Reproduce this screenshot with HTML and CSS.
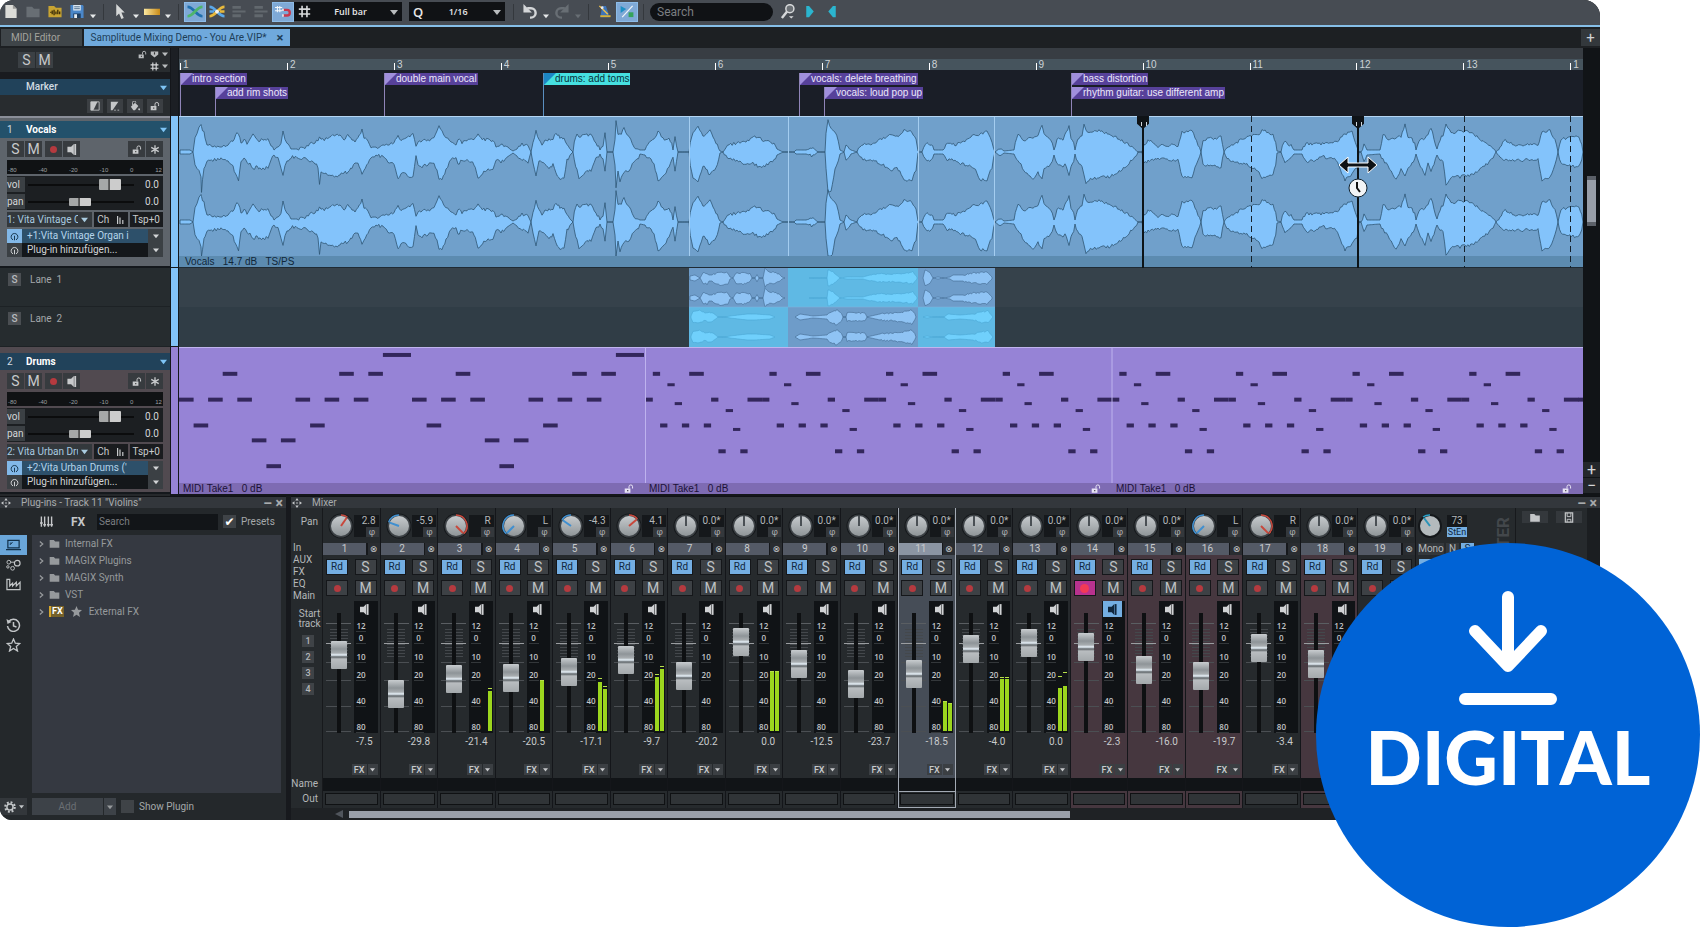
FILE: index.html
```html
<!DOCTYPE html>
<html lang="en">
<head>
<meta charset="utf-8">
<title>Samplitude Mixing Demo</title>
<link rel="stylesheet" href="styles.css">
</head>
<body>
<svg class="sprite" aria-hidden="true">
  <symbol id="caret" viewBox="0 0 8 8"><path d="M0 2h8L4 7z" fill="currentColor"/></symbol>
  <symbol id="doc" viewBox="0 0 16 16"><path d="M2 1h8l4 4v10H2z" fill="#dcdcd8"/><path d="M10 1v4h4z" fill="#9a9a98"/></symbol>
  <symbol id="folder" viewBox="0 0 16 16"><path d="M1 3h6l2 2h6v9H1z" fill="currentColor"/></symbol>
  <symbol id="wavefolder" viewBox="0 0 16 16"><path d="M1 2h6l2 2h6v10H1z" fill="#c8a432"/><path d="M3 9h1M5 7v4M7 6v6M9 8v3M11 6v5M13 8v3" stroke="#3a2c08" stroke-width="1.4"/></symbol>
  <symbol id="save" viewBox="0 0 16 16"><path d="M1 1h13l1 1v13H1z" fill="#4a86c8"/><path d="M4 1h8v6H4z" fill="#dfe9f2"/><path d="M5 3h6M5 5h6" stroke="#4a6a8a"/><path d="M4 10h8v5H4z" fill="#1f3d5f"/><path d="M5 11h3v4H5z" fill="#e8eef4"/></symbol>
  <symbol id="pointer" viewBox="0 0 16 16"><path d="M4 0v13l3-3 2.500 6 2.500-1-2.500-6H13z" fill="#d6d8d8"/></symbol>
  <symbol id="bar" viewBox="0 0 18 16"><defs><linearGradient id="gold"><stop offset="0" stop-color="#fbe8a0"/><stop offset="1" stop-color="#c88a16"/></linearGradient></defs><path d="M0 5h18v7H0z" fill="url(#gold)"/></symbol>
  <symbol id="cross" viewBox="0 0 16 16"><path d="M0 3c7 0 9 10 16 10" fill="none" stroke="#1f6fae" stroke-width="2.800"/><path d="M0 13C7 13 9 3 16 3" fill="none" stroke="#4fb56b" stroke-width="2.800"/></symbol>
  <symbol id="crosses" viewBox="0 0 16 16"><path d="M0 3c7 0 9 10 16 10M0 8h5" fill="none" stroke="#5aa7e8" stroke-width="2.800"/><path d="M0 13C7 13 9 3 16 3M11 8h5" fill="none" stroke="#e8b93c" stroke-width="2.800"/><circle cx="8" cy="8" r="2" fill="#f2f2f2"/></symbol>
  <symbol id="lines" viewBox="0 0 16 16"><path d="M1 2h9v3H1zM1 7h14v2H1zM1 11h9v3H1z" fill="#62686e"/></symbol>
  <symbol id="magnet" viewBox="0 0 20 16"><path d="M3 1v8M6 1v8M0 3h9M0 7h9" stroke="#f4f8fb" stroke-width="1.300"/><path d="M10 6h5a3 3 0 0 1 0 7h-5" fill="none" stroke="#c8384e" stroke-width="3"/><path d="M9 4.500h2v3H9zM9 11.500h2v3H9z" fill="#eee"/></symbol>
  <symbol id="hash" viewBox="0 0 16 16"><path d="M5 1v14M11 1v14M1 5h14M1 11h14" stroke="#d8dadc" stroke-width="2"/></symbol>
  <symbol id="undo" viewBox="0 0 16 16"><path d="M5 4.500h4a5 5 0 0 1 0 10H8" fill="none" stroke="currentColor" stroke-width="2.600"/><path d="M1 0v9h9z" fill="currentColor"/></symbol>
  <symbol id="metro" viewBox="0 0 16 16"><path d="M5 2h4l4 12H3z" fill="#3d74b8"/><path d="M2 2l9 9" stroke="#f0c14a" stroke-width="1.500"/><path d="M3 12h11v2H3z" fill="#d6b13a"/><circle cx="5" cy="4" r="1.500" fill="#e8e8e8"/></symbol>
  <symbol id="playstop" viewBox="0 0 20 16"><path d="M2 1l7 4-7 5z" fill="#1c8fc4"/><path d="M4 15L17 1" stroke="#f0f5f8" stroke-width="1.500"/><path d="M12 9h6v6h-6z" fill="#35a25a"/></symbol>
  <symbol id="lens" viewBox="0 0 16 16"><circle cx="10" cy="5" r="4.300" fill="#6b7075" stroke="#d6d8da" stroke-width="1.600"/><path d="M7 8l-5.500 7" stroke="#d6d8da" stroke-width="2.600"/><path d="M9 13h5l-2.500 2.500z" fill="#d6d8da"/></symbol>
  <symbol id="right" viewBox="0 0 16 16"><path d="M4 2h3l5 6-5 6H4z" fill="#2bb5cf"/></symbol>
  <symbol id="left" viewBox="0 0 16 16"><path d="M12 2H9L4 8l5 6h3z" fill="#2bb5cf"/></symbol>
  <symbol id="lock" viewBox="0 0 14 12"><path d="M1 6h8v6H1z" fill="currentColor"/><path d="M7 6V3.500a2.500 2.500 0 0 1 5 0V6" fill="none" stroke="currentColor" stroke-width="1.400"/><path d="M4.500 8h1.500v2H4.500z" fill="#333"/></symbol>
  <symbol id="flag" viewBox="0 0 12 10"><path d="M1 1h10v4L6 9 1 5z" fill="currentColor"/><path d="M6 2v3" stroke="#333" stroke-width="1.500"/></symbol>
  <symbol id="fade1" viewBox="0 0 12 12"><path d="M1 1h10v10H1z" fill="none" stroke="currentColor"/><path d="M1 11V1h8L4 11z" fill="currentColor"/></symbol>
  <symbol id="fade2" viewBox="0 0 12 12"><path d="M1 11V1h9L3 11z" fill="currentColor"/><path d="M5 11h2M9 11h2" stroke="currentColor"/></symbol>
  <symbol id="fill" viewBox="0 0 12 12"><path d="M1 7l5-5 4 4-4 5H4z" fill="currentColor"/><path d="M3 5V2a2 2 0 0 1 4 0" fill="none" stroke="currentColor"/><circle cx="11" cy="10" r="1.200" fill="currentColor"/></symbol>
  <symbol id="speaker" viewBox="0 0 10 12"><path d="M0 3h4v6H0zM3 4l4-4v12L3 8z" fill="currentColor"/><path d="M8.500 0v12" stroke="currentColor" stroke-width="2"/></symbol>
  <symbol id="star6" viewBox="0 0 12 12"><path d="M6 1v10M1.500 3.500l9 5M1.500 8.500l9-5" stroke="currentColor" stroke-width="1.600"/></symbol>
  <symbol id="power" viewBox="0 0 12 12"><path d="M4 10.500a4.500 4.500 0 1 1 4 0M6 5v6" fill="none" stroke="currentColor" stroke-width="1.300"/></symbol>
  <symbol id="bars" viewBox="0 0 10 10"><path d="M2 0v10M5 2v8M8.500 5v5" stroke="currentColor" stroke-width="1.500"/></symbol>
  <symbol id="move" viewBox="0 0 12 12"><path d="M6 0l2 3H4zM6 12l2-3H4zM0 6l3-2v4zM12 6L9 4v4z" fill="currentColor"/><circle cx="6" cy="6" r="1" fill="currentColor"/></symbol>
  <symbol id="keys" viewBox="0 0 14 12"><path d="M1.500 0v11M5 0v11M9 0v11M12.500 0v11" stroke="currentColor" stroke-width="1.500"/><path d="M0 7h3M3.500 9h3M7.500 9h3M11 9h3" stroke="currentColor" stroke-width="1.500"/></symbol>
  <symbol id="laptop" viewBox="0 0 16 12"><path d="M2 1h12v8H2zM0 11h16" fill="none" stroke="currentColor" stroke-width="1.300"/><path d="M4 6l3-3M4 4h2" stroke="currentColor"/></symbol>
  <symbol id="nodes" viewBox="0 0 16 12"><circle cx="3" cy="3" r="2" fill="none" stroke="currentColor"/><circle cx="12" cy="4" r="3" fill="none" stroke="currentColor" stroke-width="1.300"/><circle cx="7" cy="9.500" r="2" fill="none" stroke="currentColor"/><circle cx="2" cy="8" r="1.300" fill="none" stroke="currentColor"/><path d="M5 3h4" stroke="currentColor"/></symbol>
  <symbol id="factory" viewBox="0 0 16 12"><path d="M1 0v11h14V3l-4 4V3L7 7V4L4 7V0z" fill="none" stroke="currentColor" stroke-width="1.300"/></symbol>
  <symbol id="history" viewBox="0 0 14 14"><path d="M2 4a6 6 0 1 1-1 4M7 4v4l3 1" fill="none" stroke="currentColor" stroke-width="1.500"/><path d="M0 1l1 5 4-2z" fill="currentColor"/></symbol>
  <symbol id="star" viewBox="0 0 14 14"><path d="M7 1l1.800 4.200 4.500.3-3.500 2.900 1.200 4.600L7 10.500 3 13l1.200-4.600L.7 5.500l4.500-.3z" fill="none" stroke="currentColor" stroke-width="1.300"/></symbol>
  <symbol id="starfull" viewBox="0 0 14 14"><path d="M7 0l2 4.800 5 .4-3.800 3.300L11.400 14 7 11l-4.400 3 1.200-5.500L0 5.200l5-.4z" fill="currentColor"/></symbol>
  <symbol id="gear" viewBox="0 0 14 14"><circle cx="7" cy="7" r="5.500" fill="none" stroke="currentColor" stroke-width="2.500" stroke-dasharray="2.200 2.120"/><circle cx="7" cy="7" r="3.600" fill="none" stroke="currentColor" stroke-width="1.800"/></symbol>
  <symbol id="chev" viewBox="0 0 6 8"><path d="M1 1l3.500 3L1 7" fill="none" stroke="currentColor" stroke-width="1.500"/></symbol>
  <symbol id="diskette" viewBox="0 0 12 12"><path d="M2 1h8v10H2z" fill="none" stroke="currentColor" stroke-width="1.300"/><path d="M4 1v4h4V1M4 11V8h4v3" fill="none" stroke="currentColor"/></symbol>
</svg>

<main class="app">
  <header class="toolbar">
    <button class="tool" aria-label="New"><svg><use href="#doc"/></svg></button>
    <button class="tool dim" aria-label="Open"><svg><use href="#folder"/></svg></button>
    <button class="tool" aria-label="Import audio"><svg><use href="#wavefolder"/></svg></button>
    <button class="tool" aria-label="Save"><svg><use href="#save"/></svg></button>
    <button class="drop" aria-label="Save options"><svg><use href="#caret"/></svg></button>
    <i class="sep"></i>
    <button class="tool" aria-label="Pointer"><svg><use href="#pointer"/></svg></button>
    <button class="drop" aria-label="Pointer options"><svg><use href="#caret"/></svg></button>
    <button class="tool" aria-label="Range"><svg><use href="#bar"/></svg></button>
    <button class="drop" aria-label="Range options"><svg><use href="#caret"/></svg></button>
    <i class="sep"></i>
    <button class="tool on" aria-label="Crossfade"><svg><use href="#cross"/></svg></button>
    <button class="tool" aria-label="Crossfade editor"><svg><use href="#crosses"/></svg></button>
    <button class="tool" aria-label="Group"><svg><use href="#lines"/></svg></button>
    <button class="tool" aria-label="Ungroup"><svg><use href="#lines"/></svg></button>
    <button class="tool on" aria-label="Snap"><svg><use href="#magnet"/></svg></button>
    <label class="pick grid"><svg><use href="#hash"/></svg><select aria-label="Grid"><option>Full bar</option></select><svg class="caret"><use href="#caret"/></svg></label>
    <label class="pick quant"><b>Q</b><select aria-label="Quantize"><option>1/16</option></select><svg class="caret"><use href="#caret"/></svg></label>
    <i class="sep"></i>
    <button class="tool" aria-label="Undo"><svg><use href="#undo"/></svg></button>
    <button class="drop" aria-label="Undo list"><svg><use href="#caret"/></svg></button>
    <button class="tool dim flip" aria-label="Redo"><svg><use href="#undo"/></svg></button>
    <button class="drop dim" aria-label="Redo list"><svg><use href="#caret"/></svg></button>
    <i class="sep"></i>
    <button class="tool" aria-label="Metronome"><svg><use href="#metro"/></svg></button>
    <button class="tool on" aria-label="Playback mode"><svg><use href="#playstop"/></svg></button>
    <i class="sep"></i>
    <input class="search" type="search" placeholder="Search" aria-label="Search">
    <button class="tool" aria-label="Find"><svg><use href="#lens"/></svg></button>
    <button class="tool" aria-label="Next"><svg><use href="#right"/></svg></button>
    <button class="tool" aria-label="Previous"><svg><use href="#left"/></svg></button>
  </header>

  <nav class="tabs">
    <button class="tab midi">MIDI Editor</button>
    <button class="tab current">Samplitude Mixing Demo - You Are.VIP* <b>×</b></button>
    <button class="addtab" aria-label="Add tab">+</button>
  </nav>

  <section class="arranger">
    <div class="heads">
      <div class="top">
        <div class="global">
          <div class="pair"><button>S</button><button>M</button></div>
          <div class="opts">
            <span><svg><use href="#lock"/></svg><svg><use href="#flag"/></svg><svg class="caret"><use href="#caret"/></svg></span>
            <span><svg><use href="#hash"/></svg><svg class="caret"><use href="#caret"/></svg></span>
          </div>
        </div>
        <div class="title"><span></span><b>Marker</b><svg class="caret"><use href="#caret"/></svg></div>
        <div class="tools">
          <button aria-label="Fade in"><svg><use href="#fade1"/></svg></button>
          <button aria-label="Fade out"><svg><use href="#fade2"/></svg></button>
          <button aria-label="Colour"><svg><use href="#fill"/></svg></button>
          <button aria-label="Lock"><svg><use href="#lock"/></svg></button>
        </div>
      </div>
      <div class="track vocals" id="track1"></div>
      <div class="lanehead"><button>S</button>Lane&nbsp; 1</div>
      <div class="lanehead"><button>S</button>Lane&nbsp; 2</div>
      <div class="track drums" id="track2"></div>
    </div>
    <div class="stripe"><i class="s0"></i><i class="s1"></i><i class="s2"></i><i class="s3"></i></div>
    <div class="canvas">
      <div class="ruler" id="ruler"></div>
      <div class="markers" id="markers"></div>
      <div class="row audio">
        <svg id="audio" viewBox="0 0 1404 150" preserveAspectRatio="none"></svg>
        <p class="foot blue">Vocals &nbsp; 14.7 dB &nbsp; TS/PS</p>
      </div>
      <div class="row lanes"><svg id="lanes" viewBox="0 0 1404 79" preserveAspectRatio="none"></svg></div>
      <div class="row notes">
        <svg id="notes" viewBox="0 0 1404 147" preserveAspectRatio="none"></svg>
        <div class="foot violet">
          <p>MIDI Take1 &nbsp; 0 dB<svg><use href="#lock"/></svg></p>
          <p>MIDI Take1 &nbsp; 0 dB<svg><use href="#lock"/></svg></p>
          <p>MIDI Take1 &nbsp; 0 dB<svg><use href="#lock"/></svg></p>
        </div>
      </div>
      <div class="cursors" id="cursors"></div>
    </div>
    <div class="vbar"><i></i><div><button>+</button><button>−</button></div></div>
  </section>

  <section class="docks">
    <aside class="plugins">
      <h2><svg><use href="#move"/></svg>Plug-ins - Track 11 "Violins"<span>– ×</span></h2>
      <div class="pbody">
        <div class="rail">
          <button class="on" aria-label="Plug-ins"><svg><use href="#laptop"/></svg></button>
          <button aria-label="Types"><svg><use href="#nodes"/></svg></button>
          <button aria-label="Manufacturers"><svg><use href="#factory"/></svg></button>
          <button class="gap" aria-label="Recent"><svg><use href="#history"/></svg></button>
          <button aria-label="Favourites"><svg><use href="#star"/></svg></button>
          <button class="gear" aria-label="Settings"><svg><use href="#gear"/></svg><svg class="caret"><use href="#caret"/></svg></button>
        </div>
        <div class="browser">
          <div class="ptools">
            <button aria-label="Instruments"><svg><use href="#keys"/></svg></button>
            <button class="fx">FX</button>
            <input type="search" placeholder="Search" aria-label="Search plug-ins">
            <label><input type="checkbox" checked>Presets</label>
          </div>
          <ul class="tree">
            <li><svg class="chev"><use href="#chev"/></svg><svg><use href="#folder"/></svg>Internal FX</li>
            <li><svg class="chev"><use href="#chev"/></svg><svg><use href="#folder"/></svg>MAGIX Plugins</li>
            <li><svg class="chev"><use href="#chev"/></svg><svg><use href="#folder"/></svg>MAGIX Synth</li>
            <li><svg class="chev"><use href="#chev"/></svg><svg><use href="#folder"/></svg>VST</li>
            <li><svg class="chev"><use href="#chev"/></svg><b>FX</b><svg><use href="#starfull"/></svg>External FX</li>
          </ul>
          <div class="pfoot">
            <button class="add">Add</button><button class="more" aria-label="More"><svg><use href="#caret"/></svg></button>
            <label><input type="checkbox">Show Plugin</label>
          </div>
        </div>
      </div>
    </aside>
    <section class="mixer">
      <h2><svg><use href="#move"/></svg>Mixer<span>– ×</span></h2>
      <div class="desk">
        <div class="labels">
          <span class="pan">Pan</span>
          <div class="io"><span>In</span><span>AUX</span><span>FX</span><span>EQ</span><span>Main</span></div>
          <span class="start">Start<br>track</span>
          <div class="nums"><button>1</button><button>2</button><button>3</button><button>4</button></div>
          <span class="name">Name</span><span class="out">Out</span>
        </div>
        <div class="channels" id="channels"></div>
        <div class="master">
          <div class="mtop">
            <svg class="knob" viewBox="-13 -13 26 26"><circle r="12" fill="#15181b"/><circle r="10" fill="#b4babd"/><path d="M0 0L-6-8" stroke="#2a93b8" stroke-width="2"/><path d="M-7-9A11 11 0 0 1 0-11" fill="none" stroke="#2aa4cc" stroke-width="1.500"/></svg>
            <div class="panbox"><span>73</span><b>StEn</b></div>
          </div>
          <div class="mono"><button>Mono</button><button>N</button><button class="on">S</button></div>
          <div class="mbtn"><button class="on">Rd</button></div>
          <span class="vert">MASTER</span>
        </div>
        <div class="side"><button aria-label="Load"><svg><use href="#folder"/></svg></button><button aria-label="Save mixer"><svg><use href="#diskette"/></svg></button></div>
      </div>
      <div class="hbar"><svg viewBox="0 0 8 8"><path d="M8 0v8L0 4z" fill="#50555c"/></svg><i></i></div>
    </section>
  </section>
</main>

<div class="badge">
  <svg viewBox="0 0 98 114"><path d="M49 6v69M16 40l33 35 33-35M6 108h86" fill="none" stroke="#fff" stroke-width="12" stroke-linecap="round" stroke-linejoin="round"/></svg>
  <strong>DIGITAL</strong>
</div>
<script src="app.js"></script>
</body>
</html>
```

FILE: styles.css
```css
* { box-sizing: border-box; }
body { margin: 0; background: #fff; color: #b4b7b9; font: 10px/12px Roboto, "Noto Sans", sans-serif; }
button, input, select { font: inherit; color: inherit; border: 0; padding: 0; margin: 0; background: none; border-radius: 0; }
button { display: flex; align-items: center; justify-content: center; }
p, h2, ul { margin: 0; padding: 0; font-weight: normal; }
li { list-style: none; }
svg { display: block; }
.sprite { position: absolute; width: 0; height: 0; }
.caret { width: 7px; height: 7px; flex: none; }

.app { margin-right: 100px; border-radius: 14px 16px 0 12px; overflow: hidden; background: #17191d; }

/* toolbar */
.toolbar { display: flex; height: 27px; padding: 0 0 2px; background: #474c53; border-bottom: 2px solid #86bfe8; align-items: center; }
.tool { width: 22px; height: 20px; flex: none; color: #d4d6d8; }
.tool svg { width: 16px; height: 15px; }
.tool.on { background: #7fa9d6; border: 1px solid #8dbce8; }
.tool.dim, .drop.dim { color: #686e74; }
.flip svg { transform: scaleX(-1); }
.drop { width: 10px; height: 20px; flex: none; color: #e6e8e9; padding-top: 9px; }
.drop svg { width: 6px; height: 6px; }
.sep { width: 1px; height: 16px; margin: 0 5px; background: #34383d; flex: none; }
.pick { display: flex; align-items: center; height: 19px; background: #101215; color: #e8e8e8; padding: 0 4px; }
.pick svg { width: 13px; height: 13px; }
.pick .caret { width: 8px; height: 8px; color: #b9bcbe; }
.pick select { flex: 1; min-width: 0; appearance: none; text-align: center; font: 600 9px/12px "Open Sans", sans-serif; outline: 0; }
.grid { width: 108px; }
.quant { width: 96px; margin: 0 3px 0 7px; }
.quant b { font: 600 13px/16px "Open Sans", sans-serif; }
.search { width: 123px; height: 18px; margin: 0 4px 0 1px; padding: 0 7px; border-radius: 9px; background: #101215; font-size: 12px; }
::placeholder { color: #7b7e81; opacity: 1; }

/* tabs */
.tabs { display: flex; height: 21px; padding: 2px 0 2px 1px; gap: 2px; background: #1d2023; }
.tab { background: #3f4549; color: #a3a39d; }
.tab.midi { width: 81px; padding-right: 12px; }
.tab.current { width: 206px; background: #6fa9dc; color: #1d3d57; gap: 10px; }
.tab b { font-size: 13px; }
.addtab { width: 19px; margin-left: auto; background: #33383c; color: #d0d2d4; font-size: 15px; }

/* arranger */
.arranger { display: flex; height: 448px; }
.heads { width: 171px; flex: none; background: #25282b; border-right: 1px solid #14161a; }
.top { height: 68px; display: flex; flex-direction: column; background: #282c2f; }
.global { display: flex; height: 31px; padding: 0 2px 0 18px; justify-content: space-between; border-bottom: 7px solid #191b1f; }
.pair { display: flex; gap: 1px; padding-top: 4px; }
.pair button { width: 17px; height: 16px; background: #3b4044; color: #c6c8ca; font-size: 14px; line-height: 16px; }
.opts { display: flex; flex-direction: column; align-items: flex-end; color: #b9bcbe; }
.opts span { display: flex; height: 12px; gap: 3px; align-items: center; }
.opts svg { width: 9px; height: 9px; }
.opts .caret { width: 6px; height: 6px; }
.title { display: flex; align-items: center; height: 16px; padding: 0 3px 0 7px; background: #21425a; color: #d2dbe2; font-size: 10px; }
.title span { width: 19px; }
.title b { flex: 1; font-weight: 500; }
.title .caret { color: #7ec4f5; }
.tools { display: flex; gap: 4px; justify-content: flex-end; padding: 4px 7px 0 0; color: #c4c6c8; }
.tools button { width: 16px; height: 14px; background: #3b3f43; }
.tools svg { width: 10px; height: 10px; }

.track { padding-top: 6px; border-bottom: 2px solid #14181c; }
.vocals { height: 152px; padding-top: 3px; background: #5e646b; border-top: 2px solid #8a8e98; }
.drums { height: 147px; background: #514a50; }
.track .title { height: 17px; }
.track.vocals .title { background: #23516b; }
.track .title b { color: #fff; font-weight: 700; }
.tb { padding: 3px 7px 0; display: grid; gap: 2px; }
.btns { display: flex; height: 17px; padding-bottom: 1px; gap: 1px; }
.btns button { width: 17px; background: #373b3f; color: #c8cacc; font-size: 14px; }
.btns svg { width: 10px; height: 11px; }
.btns .off { margin-left: 2px; }
.btns .end { margin-left: auto; }
.rec { width: 7px; height: 7px; border-radius: 50%; background: #b53a3f; }
.scale { display: flex; justify-content: space-between; align-items: flex-end; height: 14px; background: #101214; color: #9da0a2; font: 6px/7px "Liberation Sans", sans-serif; padding: 0 1px; }
.slides { height: 34px; background: #1c1f22; }
.slides label { display: flex; height: 17px; align-items: center; color: #d4d6d8; }
.slides span { width: 18px; flex: none; background: #3b4044; line-height: 15px; }
.slides input { width: 106px; margin: 0 3px; height: 15px; appearance: none; background: linear-gradient(#0b0c0d, #0b0c0d) center / 100% 2px no-repeat; }
.slides input::-webkit-slider-thumb { appearance: none; width: 22px; height: 11px; border-radius: 1px; background: linear-gradient(90deg, #a6a8a8 40%, #222 46%, #ccc 52%); }
.slides .panner::-webkit-slider-thumb { height: 8px; }
.slides output { margin-left: auto; margin-right: 4px; }
.inst { display: flex; gap: 2px; height: 15px; }
.inst .sel { display: flex; align-items: center; width: 85px; background: #33383c; color: #a9cbe0; padding-right: 4px; }
.inst select { flex: 1; min-width: 0; margin-right: 3px; appearance: none; white-space: nowrap; overflow: hidden; }
.inst .cell { display: flex; flex: 1; align-items: center; justify-content: space-around; background: #1a1c1f; color: #c8cacc; }
.inst .cell svg { width: 8px; height: 8px; }
.plug { display: flex; height: 14px; background: #14171a; color: #d2d4d6; }
.plug + .plug { margin-top: -2px; }
.plug button { width: 15px; background: #3b4044; }
.plug button svg { width: 9px; height: 9px; }
.plug span { flex: 1; padding-left: 5px; line-height: 14px; white-space: nowrap; overflow: hidden; }
.plug button.caretb svg { width: 6px; height: 6px; }
.plug.on span { background: #2d506a; color: #b4d4ea; }
.plug.on .pw { background: #82b8e8; color: #17364e; }
.lanehead { display: flex; gap: 9px; height: 39px; padding: 5px 8px; background: #262c2f; border-bottom: 1px solid #1d2225; color: #a3a7aa; line-height: 13px; }
.lanehead + .lanehead { height: 40px; }
.lanehead button { width: 13px; height: 13px; background: #4a4e52; color: #b8bbbe; font-weight: 500; }

.stripe { width: 8px; flex: none; display: flex; flex-direction: column; background: #14181c; padding-right: 1px; }
.s0 { height: 68px; background: #1c1f24; }
.s1 { height: 151px; margin-bottom: 1px; background: #83c3f8; }
.s2 { height: 78px; margin-bottom: 1px; background: #83c3f8; }
.s3 { height: 147px; background: #9683d6; }

.canvas { flex: 1; min-width: 0; position: relative; overflow: hidden; background: #14161a; }
.ruler { position: relative; height: 22px; border-top: 11px solid #383d43; background: #46545d; }
.ruler span { position: absolute; bottom: 0; height: 11px; font: 10px/11px "Liberation Sans", sans-serif; color: #cdd3d7; padding-left: 3px; white-space: nowrap; }
.ruler span::before { content: ""; position: absolute; left: 0; bottom: 0; width: 1px; height: 7px; background: #fff; }
.markers { position: relative; height: 46px; background: #1a1e27; }
.mark { position: absolute; top: 3px; bottom: 0; border-left: 1px solid #8f84b8; }
.mark.second { top: 17px; }
.mark span { display: block; height: 12px; padding: 0 1px 0 11px; font: 10px/12px "Liberation Sans", sans-serif; color: #ece8fa; white-space: nowrap; background: linear-gradient(135deg, #a08fdc 8px, #57419a 9px); }
.mark.cyan { border-color: #5a8fc0; }
.mark.cyan span { color: #06323a; background: linear-gradient(135deg, #1c86c4 8px, #46e0e0 9px); }
.row { position: relative; }
.row > svg { width: 100%; height: 100%; }
.audio { height: 152px; background: #70a0cb; border-top: 1px solid #b4d6f4; border-bottom: 1px solid #1f2b34; }
.lanes { height: 79px; background: linear-gradient(#36424b 39px, #303d46 39px); }
.notes { height: 147px; background: #9683d6; border-top: 1px solid #c0b4ee; }
.foot { position: absolute; left: 0; right: 0; bottom: 0; height: 11px; font: 10px/11px "Liberation Sans", sans-serif; }
.foot.blue { padding-left: 6px; background: #5c8bb0; color: #10273a; }
.foot.violet { display: grid; grid-template-columns: 466fr 467fr 471fr; background: #7e6bb3; color: #1c1238; }
.foot p { display: flex; padding-left: 4px; white-space: pre; }
.foot.violet p svg { width: 10px; height: 9px; margin: 1px 11px 0 auto; color: #e8e4f6; }
.cursors { position: absolute; inset: 68px 0 auto 0; height: 152px; }
.cursors i { position: absolute; top: 0; width: 1px; height: 152px; background: repeating-linear-gradient(#14202a 0 6px, transparent 6px 10px); }
.cursors .solid { width: 2px; margin-left: -1px; background: #0d1418; }
.cursors .solid::before { content: ""; position: absolute; left: -5px; top: 0; width: 12px; height: 13px; background: #0f1317; clip-path: polygon(0 0, 100% 0, 100% 60%, 50% 100%, 0 60%); }
.cursors .solid::after { content: ""; position: absolute; left: -1px; top: 6px; width: 4px; height: 4px; border: solid #cfd6dc; border-width: 0 1px; }
.cursors svg { position: absolute; top: 41px; width: 38px; height: 42px; margin-left: -19px; }
.vbar { width: 17px; flex: none; display: flex; flex-direction: column; background: #111417; }
.vbar i { width: 9px; height: 50px; margin: 128px 0 0 4px; background: #989ea8; border: solid #5b6068; border-width: 4px 0; }
.vbar div { margin-top: auto; padding-bottom: 3px; }
.vbar button { width: 17px; height: 15px; background: #24272b; color: #d4d6d8; font-size: 16px; margin-top: 1px; }

/* docks */
.docks { display: flex; height: 324px; gap: 5px; }
h2 { display: flex; align-items: center; height: 12px; padding: 0 3px 0 1px; gap: 10px; background: #33373c; font-size: 10px; line-height: 12px; color: #a8abad; border-top: 1px solid #101215; }
h2 svg { width: 10px; height: 10px; color: #c6c8ca; }
h2 span { margin-left: auto; font-size: 14px; font-weight: 700; }
.plugins { width: 286px; flex: none; background: #24282b; display: flex; flex-direction: column; }
.pbody { display: flex; flex: 1; gap: 5px; }
.rail { width: 27px; display: flex; flex-direction: column; padding-top: 27px; }
.rail button { height: 20px; color: #c2c5c7; }
.rail svg { width: 15px; height: 14px; }
.rail .on { background: #6aa6d9; color: #12304a; }
.rail .gap { margin-top: 20px; }
.rail .gear { margin: auto 0 5px; height: 17px; background: #33373b; gap: 3px; }
.rail .gear svg { width: 12px; height: 12px; }
.rail .gear .caret { width: 5px; height: 5px; }
.browser { flex: 1; padding-right: 5px; display: flex; flex-direction: column; color: #96999c; }
.ptools { display: flex; align-items: center; height: 27px; }
.ptools button { width: 28px; height: 18px; color: #c6c8ca; }
.ptools svg { width: 13px; height: 12px; }
.ptools .fx { margin: 0 5px 0 4px; font-weight: 700; font-size: 12px; }
.ptools input[type=search] { width: 121px; height: 16px; padding: 0 2px; background: #121518; }
.ptools label, .pfoot label { display: flex; align-items: center; gap: 5px; margin-left: 5px; color: #a5a8aa; }
input[type=checkbox] { appearance: none; width: 13px; height: 13px; background: #3f4347; display: grid; place-items: center; }
input[type=checkbox]:checked::after { content: "✔"; color: #fff; font: 12px/12px "DejaVu Sans", sans-serif; }
.tree { flex: 1; background: #353941; }
.tree li { display: flex; align-items: center; height: 17px; gap: 5px; padding-left: 7px; }
.tree svg { width: 11px; height: 11px; }
.tree .chev { width: 5px; height: 8px; }
.tree b { border-left: 2px solid #d6a72c; padding: 0 1px; background: #75612a; color: #fff; font-size: 9px; line-height: 11px; }
.tree b + svg { margin: 0 2px; }
.pfoot { display: flex; align-items: center; height: 27px; }
.pfoot button { height: 17px; background: #3d4248; }
.pfoot .add { width: 71px; color: #6b6f74; }
.more { width: 12px; margin-left: 1px; }
.more svg { width: 6px; height: 6px; }

.mixer { flex: 1; min-width: 0; background: #262a2d; display: flex; flex-direction: column; }
.desk { display: flex; flex: 1; }
.labels { width: 32px; flex: none; display: flex; flex-direction: column; border-right: 1px solid #17191c; line-height: 12px; }
.pan { margin-top: 8px; text-align: right; padding-right: 4px; }
.io { display: grid; margin-top: 14px; line-height: 12px; padding-left: 2px; }
.start { text-align: center; line-height: 10px; margin-top: 7px; padding-left: 6px; }
.nums { display: grid; gap: 4px; justify-content: center; margin-top: 6px; padding-left: 3px; }
.nums button { width: 12px; height: 12px; background: #3f4347; font-size: 9px; font-weight: 500; }
.name { margin: 83px 4px 0 0; text-align: right; }
.out { margin: 3px 4px 0 0; text-align: right; }
.channels { flex: 1; display: grid; grid-template-columns: repeat(19, 1fr); }
.ch { display: flex; flex-direction: column; border-right: 1px solid #14161a; min-width: 0; }
.ptop, .mtop { display: flex; height: 35px; padding: 5px 1px 0 5px; justify-content: space-between; }
.knob { width: 26px; height: 26px; flex: none; }
.panbox { display: flex; flex-direction: column; align-items: flex-end; width: 25px; height: 22px; margin-top: 2px; background: #15181b; line-height: 12px; white-space: nowrap; }
.panbox span { padding-right: 3px; }
.panbox b { width: 13px; height: 10px; background: #34383c; text-align: center; font: 9px/9px "Open Sans", sans-serif; }
.no { display: flex; height: 12px; background: #16181b; justify-content: space-between; text-align: center; color: #c8cacc; }
.no span { width: 43px; background: #545a66; line-height: 12px; }
.no i { width: 12px; background: #2a2d31; font: 9px/12px "DejaVu Sans", sans-serif; }
.core { padding: 4px 2px 0 3px; flex: 1; display: flex; flex-direction: column; }
.two { display: flex; justify-content: space-between; margin-bottom: 5px; padding-right: 1px; }
.two button { width: 22px; height: 16px; background: #3d4145; border: 1px solid #15171a; color: #bfc2c4; font-size: 14px; }
.two .rd { background: #74aee2; color: #10263c; font-size: 10px; }
.two .armed { background: #b8328e; }
.two .armed .rec { background: #f23a55; width: 9px; height: 9px; }
.body { display: flex; height: 132px; gap: 3px; }
.fad { width: 25px; height: 132px; padding-top: 12px; flex: none; background: linear-gradient(#5a5e62, #5a5e62) 0 22px / 100% 1px no-repeat, linear-gradient(#9a9da0, #9a9da0) 0 42px / 100% 1px no-repeat, linear-gradient(#4b4f53, #4b4f53) 0 61px / 100% 1px no-repeat, linear-gradient(#4b4f53, #4b4f53) 0 79px / 100% 1px no-repeat, linear-gradient(#4b4f53, #4b4f53) 0 105px / 100% 1px no-repeat, linear-gradient(#4b4f53, #4b4f53) 0 130px / 100% 1px no-repeat, repeating-linear-gradient(transparent 0 2px, #44484c 2px 3px) 50% 26px / 18px 30px no-repeat; }
.fad input { display: block; width: 16px; height: 120px; margin: 0 auto; appearance: none; writing-mode: vertical-lr; direction: rtl; background: linear-gradient(#0e1012, #0e1012) center / 4px 100% no-repeat; }
.fad input::-webkit-slider-thumb { appearance: none; width: 16px; height: 28px; border-radius: 1px; background: linear-gradient(#c8cccf, #8e9498 8px, #a8adb0 12px, #e8f2fa 14px, #5e6468 16px, #b9bdc0 18px, #a4a9ac); }
.meter { position: relative; flex: 1; background: #101316; color: #c4c6c8; }
.meter .spk { height: 16px; width: 19px; margin-left: 1px; color: #d0d2d4; }
.meter .spk svg { width: 9px; height: 11px; }
.meter .spk.on { background: #74aee2; color: #10263c; }
.meter ol { margin: 0; padding: 3px 0 0 2px; list-style: none; width: 12px; font: 600 8px/12px "Open Sans", sans-serif; text-align: center; }
.meter li:nth-child(3) { margin-top: 7px; }
.meter li:nth-child(4) { margin-top: 6px; }
.meter li:nth-child(5), .meter li:nth-child(6) { margin-top: 14px; }
.meter li { border-bottom: 1px solid #33373a; height: 12px; }
.level { position: absolute; bottom: 2px; width: 4px; background: #9cd61e; }
.level.l { right: 6px; }
.level.r { right: 1px; }
.level::before { content: ""; position: absolute; left: 0; width: 4px; height: 1px; background: #b8e04a; top: var(--peak, 0); }
.db { text-align: right; padding: 3px 5px 0 0; line-height: 12px; color: #c8cacc; }
.fx2 { display: flex; justify-content: flex-end; gap: 1px; margin: auto 0 3px; }
.fx2 button { height: 11px; width: 15px; background: #3b3f43; color: #c8cacc; font-size: 9px; font-weight: 500; }
.fx2 button + button { width: 10px; }
.fx2 svg { width: 5px; height: 5px; }
.nm { height: 13px; background: #111417; }
.ot { height: 17px; padding: 2px; }
.ot i { display: block; height: 12px; background: #303437; border: 1px solid #0f1113; }
.ch.red .core, .ch.red .ot { background: #46373f; }
.ch.sel { border: solid #a3aab4; border-width: 0 1px; }
.ch.sel .core { background: #464d57; padding-left: 2px; }
.ch.sel .ot { border: solid #a3aab4; border-width: 1px 0; padding: 1px; }
.ch.sel .no span { background: #8b95a3; }
.master { position: relative; width: 100px; border-right: 1px solid #17191c; }
.mtop { justify-content: flex-start; gap: 4px; padding-left: 1px; }
.mtop .panbox { width: 20px; align-items: center; }
.mtop .panbox span { padding: 0; }
.mtop .panbox b { width: 20px; background: #74aee2; color: #10263c; font: 9px/10px Roboto, sans-serif; }
.mono { display: flex; gap: 2px; height: 12px; padding-left: 2px; }
.mono button { width: 13px; background: #34383c; }
.mono button:first-child { width: 26px; }
.mono button.on, .mbtn .on { background: #74aee2; color: #10263c; }
.mbtn { padding: 4px 3px; }
.mbtn button { width: 22px; height: 16px; }
.vert { position: absolute; top: 9px; right: 3px; writing-mode: vertical-rl; transform: rotate(180deg); font: 700 17px/18px Roboto, sans-serif; color: #43474b; }
.side { width: 84px; flex: none; display: flex; gap: 8px; padding: 3px 0 0 6px; border-right: 13px solid #1b1e21; }
.side button { width: 26px; height: 12px; background: #34383c; color: #c4c6c8; }
.side svg { width: 12px; height: 11px; }
.hbar { display: flex; align-items: center; height: 12px; padding-left: 44px; gap: 6px; background: #1f2225; }
.hbar svg { width: 8px; height: 8px; }
.hbar i { width: 57%; height: 7px; background: #9aa0aa; }

/* download badge */
.badge { position: absolute; top: 543px; right: 0; width: 384px; height: 384px; border-radius: 50%; background: #0063d6; display: flex; flex-direction: column; align-items: center; padding-top: 48px; gap: 8px; }
.badge svg { width: 98px; height: 114px; }
.badge strong { color: #fff; font: 900 74px/88px Lato, sans-serif; }
```

FILE: app.js
```js
const $ = id => document.getElementById(id);
const use = n => `<svg><use href="#${n}"/></svg>`;
const W = 1404;
const pct = x => (x / W * 100) + '%';

/* track heads */
[['1', 'Vocals', '1: Vita Vintage Organ', '+1:Vita Vintage Organ i'], ['2', 'Drums', '2: Vita Urban Drums', "+2:Vita Urban Drums ('"]].forEach(([n, name, inst, fx]) => {
  $('track' + n).innerHTML = `<div class="title"><span>${n}</span><b>${name}</b><svg class="caret"><use href="#caret"/></svg></div>
  <div class="tb">
    <div class="btns"><button>S</button><button>M</button><button class="off" aria-label="Record"><i class="rec"></i></button><button aria-label="Monitor">${use('speaker')}</button><button class="end" aria-label="Lock">${use('lock')}</button><button aria-label="Freeze">${use('star6')}</button></div>
    <div class="scale"><span>-80</span><span>-40</span><span>-20</span><span>-10</span><span>0</span><span>12</span></div>
    <div class="slides"><label><span>vol</span><input type="range" value="84"><output>0.0</output></label><label><span>pan</span><input class="panner" type="range" value="49"><output>0.0</output></label></div>
    <div class="inst"><div class="sel"><select aria-label="Instrument"><option>${inst}</option></select><svg class="caret"><use href="#caret"/></svg></div><div class="cell">Ch ${use('bars')}</div><div class="cell">Tsp+0</div></div>
    <div class="plug on"><button class="pw" aria-label="Bypass">${use('power')}</button><span>${fx}</span><button class="caretb" aria-label="Menu">${use('caret')}</button></div>
    <div class="plug"><button class="pw" aria-label="Bypass">${use('power')}</button><span>Plug-in hinzufügen...</span><button class="caretb" aria-label="Menu">${use('caret')}</button></div>
  </div>`;
});

/* ruler and markers */
$('ruler').innerHTML = Array.from({ length: 14 }, (_, i) => `<span style="left:${pct(1 + i * 106.95)}">${i === 13 ? 1 : i + 1}</span>`).join('');
$('markers').innerHTML = [[1, 'intro section'], [36, 'add rim shots', 'second'], [205, 'double main vocal'], [364, 'drums: add toms', 'cyan'], [620, 'vocals: delete breathing'], [645, 'vocals: loud pop up', 'second'], [892, 'bass distortion'], [892, 'rhythm guitar: use different amp', 'second']]
  .map(([x, t, c = '']) => `<div class="mark ${c}" style="left:${pct(x)}"><span>${t}</span></div>`).join('');

/* waveform envelopes: x, peak above, peak below */
const vocals = `1 2 2,11 2 2,14 0 0,16 13 13,18 18 17,20 24 20,22 27 25,22.5 25 41,23.5 20 27,25 21 17,26 14 15,28 8 9,34 6 8,42 5 7,49 8 9,54 11 15,58 20 26,59.5 19 28,62 8 10,65 14 7,68 8 10,71 13 12,74 19 17,77 13 15,81 11 16,84 13 17,89 12 15,92 6 8,95 2 3,99 5 6,102 10 15,104 21 23,106 13 15,108 8 9,112 3 5,118 3 5,126 4 7,131 8 9,136 10 11,139 12 15,140.5 16 31,142 12 20,147 13 21,152 17 24,157 17 25,161 17 23,165 12 20,169 17 21,173 11 15,176 11 10,179 15 10,183 22 22,185 15 18,189 12 12,192 4 6,197 4 3,204 6 5,209 7 9,215 10 13,219 17 28,222 12 22,227 14 22,231 15 25,234 19 24,237 6 4,239 10 12,243 12 15,249 12 12,255 13 11,258 22 18,260 26 28,263 20 28,267 15 17,272 10 8,277 6 6,279 13 12,283 9 8,288 12 8,295 13 12,299 17 27,302 13 22,309 12 18,314 11 16,317 6 8,322 7 10,329 4 5,334 1 1,338 3 4,343 8 8,349 6 10,352 0 0,354 10 10,357 21 23,360 13 10,363 8 9,366 12 12,370 12 17,374 13 13,377 19 22,381 15 27,385 13 27,388 7 8,392 2 2,394 0 0,398 17 17,400 16 26,408 17 18,412 17 19,417 8 7,421 2 2,424 7 8,426 19 20,428 0 0,434 0 0,436 12 12,437 31 35,439 17 18,441 17 30,445 23 20,450 15 19,455 5 10,461 2 2,466 2 3,472 10 7,475 12 13,479 21 28,484 13 25,490 13 15,494 2 5,496 14 20,499 0 0,510 0 0,514 18 25,519 27 30,524 15 13,531 21 23,537 8 15,541 1 1,544 0 0,550 7 7,558 9 9,567 10 12,573 15 11,580 15 15,586 10 14,592 10 10,598 3 3,604 0 0,615 0 0,617 2 2,627 2 2,634 4 4,639 0 0,646 0 0,647 18 15,649 32 40,652 23 38,656 20 18,661 2 2,665 0 0,667 6 7,672 2 2,678 0 0,684 8 8,693 8 8,703 13 12,712 18 18,718 15 15,725 22 28,733 20 28,737 13 18,739 1 1,743 0 0,748 10 10,755 2 2,764 2 2,767 8 8,776 7 8,783 10 12,795 17 15,801 18 28,808 21 28,813 10 15,816 0 0,821 4 4,825 1 1,835 2 2,839 18 8,845 12 18,854 15 27,859 16 20,863 27 28,865 17 16,870 15 14,875 2 3,878 13 12,884 13 15,886 18 12,890 26 23,892 14 16,896 2 2,900 14 12,903 17 15,905 28 22,907 22 33,910 20 28,920 22 25,930 18 25,943 12 18,953 5 8,959 0 0,963 0 0,965 7 12,969 12 8,979 6 7,999 7 8,1003 20 25,1009 20 25,1013 22 25,1019 7 8,1022 0 0,1024 12 13,1042 15 15,1045 0 0,1054 8 10,1068 15 13,1080 18 20,1083 22 27,1094 17 22,1098 1 1,1102 0 0,1106 10 10,1115 2 2,1123 2 2,1127 8 10,1145 8 5,1157 10 7,1166 18 28,1173 20 23,1178 5 15,1180 0 0,1182 0 0,1185 7 10,1188 2 3,1201 2 2,1204 18 8,1209 12 14,1217 15 27,1222 16 18,1226 27 23,1229 16 17,1233 13 11,1237 2 2,1240 11 12,1246 14 22,1249 16 12,1252 25 20,1255 13 12,1258 3 3,1264 17 10,1267 28 32,1272 18 25,1281 22 25,1295 18 22,1307 8 13,1317 0 0,1321 5 6,1325 12 8,1335 7 8,1359 7 8,1363 20 28,1371 22 25,1376 12 12,1379 0 0,1382 13 12,1400 15 15,1404 0 0`;

const parse = s => s.split(',').map(p => p.trim().split(' ').map(Number));
const noise = x => { const v = Math.sin(x * 12.9898) * 43758.5453; return v - Math.floor(v); };

/* blobs swell quickly out of silence and fall back late */
const blend = (from, to, t, len) => {
  if (len > 3 && Math.min(from, to) < 5 && Math.max(from, to) > 6) t = to > from ? Math.pow(t, 0.6) : 1 - Math.pow(1 - t, 0.6);
  return from + (to - from) * t;
};

function wave(points, mid, limit, rough) {
  const up = [], down = [];
  points.forEach((p, i) => {
    const q = points[i + 1] || p;
    const len = q[0] - p[0];
    const steps = Math.max(1, Math.round(len / 1.5));
    for (let k = 0; k < steps; k++) {
      const t = k / steps;
      const x = p[0] + len * t;
      let a = blend(p[1], q[1], t, len);
      let b = blend(p[2], q[2], t, len);
      if (a > 3) a += (noise(x) - 0.5) * rough;
      if (b > 3) b += (noise(x + 7) - 0.5) * rough;
      up.push(`${x.toFixed(1)} ${(mid - a).toFixed(1)}`);
      down.unshift(`${x.toFixed(1)} ${Math.min(limit, mid + b).toFixed(1)}`);
    }
  });
  return `M${up.join('L')}L${down.join('L')}Z`;
}

const v = parse(vocals);
const splits = [510.5, 609.5, 739.5, 815.5];
$('audio').innerHTML = [35, 105].map(m => `<path d="${wave(v, m, 139, 3)}" fill="#83c3fb" stroke="#2f5574" stroke-width=".8"/>`).join('') +
  splits.map(x => `<path d="M${x} 0V150" stroke="#a4cdf0"/>`).join('');

/* comping lanes */
const takes = [
  [[0, 510, 99, 0, '511 2 2,516 3 3,521 0 0,524 5 5,528 5 6,530 3 3,533 3 3,541 6 7,549 5 6,551 1 1,554 0 0,557 5 5,564 5 6,571 4 4,573 0 0,576 0 0,578 4 4,580 0 0,584 0 0,586 9 9,589 6 6,594 6 6,600 4 4,603 1 1,606 0 0'],
   [0, 609, 130, 1, '630 0 0,638 0 0,648 0 0,649 8 8,654 6 6,661 0 0,668 1 1,676 1 1,684 1 1,691 3 3,704 4 4,718 4 4,728 5 5,734 6 6,738 1 1'],
   [0, 739, 77, 0, '744 0 0,746 8 8,751 5 5,754 0 0,759 1 1,764 0 0,771 1 1,774 3 3,784 3 3,794 5 5,808 6 6,813 1 1']],
  [[1, 510, 99, 1, '512 1 1,514 5 5,519 7 6,526 4 4,533 5 5,539 0 0,547 0 0,551 1 1,568 3 3,576 3 3,591 2 2,596 0 0'],
   [1, 609, 130, 0, '616 0 0,621 3 3,634 1 1,648 2 2,651 5 5,658 7 8,664 0 0,667 0 0,668 4 4,686 4 4,688 0 0,692 1 1,701 3 3,714 4 4,724 5 5,733 7 7,737 0 0'],
   [1, 739, 77, 1, '744 0 0,748 1 1,754 0 0,765 0 0,769 3 3,781 2 2,794 3 3,801 5 5,809 6 6,814 0 0']]
].flat();
$('lanes').innerHTML = takes.map(([lane, x, w, on, env]) => {
  const y = lane * 39, e = parse(env);
  return `<rect x="${x}" y="${y}" width="${w}" height="${39 + lane}" fill="${on ? '#5fb9e4' : '#6e9cc9'}"/>` +
    [10, 30].map(m => `<path d="${wave(e, y + m, 99, 1.6)}" fill="${on ? '#70d0fc' : '#8fc3f4'}" stroke="${on ? '#4aa6d4' : '#41688f'}" stroke-width=".6"/>`).join('');
}).join('') + `<path d="M510 39H816" stroke="#7fb4dc" stroke-width=".6"/>`;

/* MIDI notes */
const notes = [];
const put = (x, y, w, h = 4) => notes.push(`<rect x="${x.toFixed(1)}" y="${y - h / 2}" width="${w.toFixed(1)}" height="${h}"/>`);
const u1 = 466 / 32, u2 = 466.5 / 64;
[0, 16].forEach(o => [52, 78, 52, 26, 52, 93, 119, 93, 52, 78, 52, 26, 52, 26, 7].forEach((y, i) => put((o + i) * u1, y, i === 14 ? u1 * 2 - 1 : u1)));
[466.5, 933].forEach(start => {
  for (let r = 0; r < 4; r++) {
    [[0, 52], [1, 26], [2, 78], [3, 37], [4, 56], [5, 78], [6, 26, 2], [8, 78], [9, 52], [10, 104], [11, 63], [12, 82], [13, 104], [14, 52, 2]]
      .forEach(([k, y, n = 1]) => put(start + (r * 16 + k) * u2, y, u2 * n, [37, 56, 63, 82].includes(y) ? 3 : 4));
  }
});
put(1399, 52, 5);
$('notes').innerHTML = `<g fill="#33275c">${notes.join('')}</g><path d="M466.500 0V147M933 0V147" stroke="#beb2ee"/>`;

$('cursors').innerHTML = [1072, 1285, 1391].map(x => `<i style="left:${pct(x)}"></i>`).join('') +
  [964, 1179].map(x => `<i class="solid" style="left:${pct(x)}"></i>`).join('') +
  `<svg viewBox="0 0 38 42" style="left:${pct(1179)}"><path d="M0 8L9 0v6h20V0l9 8-9 8v-6H9v6z" fill="#0d1216" stroke="#fff" stroke-width="1"/><circle cx="19" cy="31" r="9" fill="#f2f4f6" stroke="#10202c"/><path d="M18 25v6l3 4" fill="none" stroke="#111" stroke-width="2"/></svg>`;

/* mixer: pan text, knob angle, fader offset from top, level, left/right meter heights and peak gaps */
const channels = [
  ['2.8', 35, 28, '-7.5'], ['-5.9', -70, 67, '-29.8'], ['R', 135, 52, '-21.4', 0, 40, 0, 3], ['L', -135, 51, '-20.5', 51, 0],
  ['-4.3', -55, 45, '-17.1', 49, 42, 4, 3], ['4.1', 50, 33, '-9.7', 54, 62, 3, 3], ['0.0*', 0, 49, '-20.2'], ['0.0*', 0, 15, '0.0', 60, 60],
  ['0.0*', 0, 37, '-12.5'], ['0.0*', 0, 57, '-23.7'], ['0.0*', 0, 47, '-18.5', 30, 28], ['0.0*', 0, 22, '-4.0', 52, 52, 2, 2],
  ['0.0*', 0, 16, '0.0', 43, 45, 12, 14], ['0.0*', 0, 20, '-2.3'], ['0.0*', 0, 43, '-16.0'], ['L', -135, 49, '-19.7'],
  ['R', 135, 21, '-3.4'], ['0.0*', 0, 37, '-12.4'], ['0.0*', 0, 37, '-12.4']
];
const knob = a => {
  const c = a === 0 ? '#4a5055' : a > 0 ? '#c8483c' : '#3f8fd0';
  const r = a * Math.PI / 180, x = Math.sin(r), y = -Math.cos(r);
  const arc = a ? `<path d="M0-11A11 11 0 0 ${a > 0 ? 1 : 0} ${(x * 11).toFixed(1)} ${(y * 11).toFixed(1)}" fill="none" stroke="${c}" stroke-width="1.500"/>` : '';
  return `<svg class="knob" viewBox="-13 -13 26 26"><defs><linearGradient id="kg" x2="0" y2="1"><stop stop-color="#c6cacd"/><stop offset="1" stop-color="#8f9598"/></linearGradient></defs><circle r="12.500" fill="#15181b"/><circle r="11.500" fill="#3c4145"/><circle r="10" fill="url(#kg)"/><path d="M0 0L${(x * 10).toFixed(1)} ${(y * 10).toFixed(1)}" stroke="${c}" stroke-width="2"/>${arc}</svg>`;
};
const level = (side, h, peak) => h ? `<i class="level ${side}" style="height:${h}px;--peak:${-(peak || 0)}px"></i>` : '';
$('channels').innerHTML = channels.map(([pan, a, f, db, l, r, lp, rp], i) => {
  const n = i + 1, red = [14, 15, 16, 18].includes(n), armed = n === 14;
  return `<div class="ch${red ? ' red' : ''}${n === 11 ? ' sel' : ''}">
    <div class="ptop">${knob(a)}<div class="panbox"><span>${pan}</span><b>φ</b></div></div>
    <div class="no"><span>${n}</span><i>⊗</i></div>
    <div class="core">
      <div class="two"><button class="rd">Rd</button><button>S</button></div>
      <div class="two"><button class="${armed ? 'armed' : ''}" aria-label="Record"><i class="rec"></i></button><button>M</button></div>
      <div class="body"><div class="fad"><input type="range" min="0" max="92" value="${92 - f}" aria-label="Volume ${n}"></div>
        <div class="meter"><button class="spk${armed ? ' on' : ''}" aria-label="Monitor">${use('speaker')}</button><ol><li>12</li><li>0</li><li>10</li><li>20</li><li>40</li><li>80</li></ol>${level('l', l, lp)}${level('r', r, rp)}</div></div>
      <div class="db">${db}</div>
      <div class="fx2"><button>FX</button><button aria-label="FX menu">${use('caret')}</button></div>
    </div>
    <div class="nm"></div><div class="ot"><i></i></div>
  </div>`;
}).join('');
```
